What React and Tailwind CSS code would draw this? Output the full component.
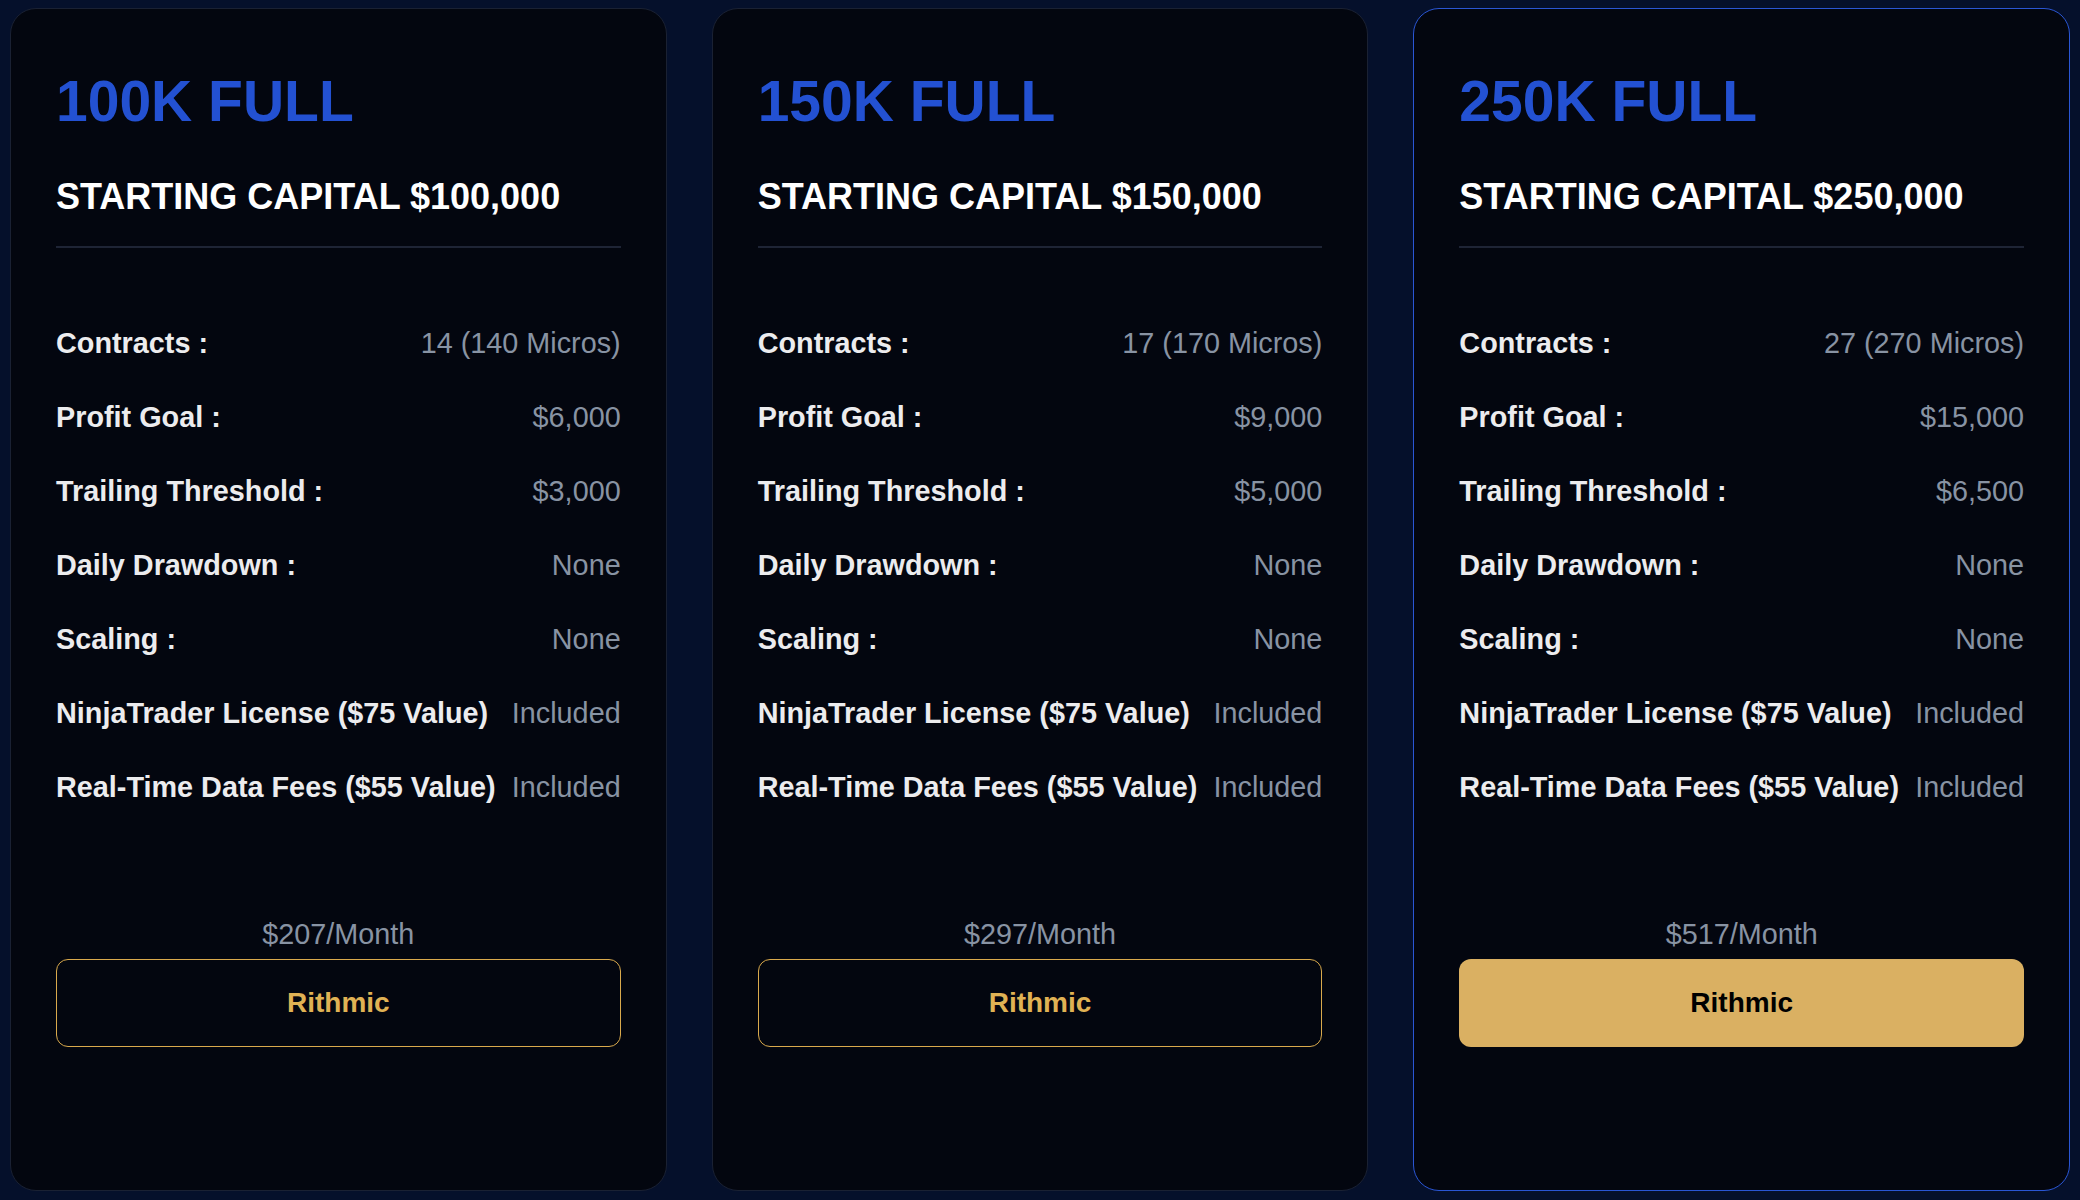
// Pricing cards — three "FULL" account plans side by side

const PLANS = [
  {
    name: '100K FULL',
    capital: '$100,000',
    contracts: '14 (140 Micros)',
    profit: '$6,000',
    trailing: '$3,000',
    price: '$207/Month',
    featured: false,
  },
  {
    name: '150K FULL',
    capital: '$150,000',
    contracts: '17 (170 Micros)',
    profit: '$9,000',
    trailing: '$5,000',
    price: '$297/Month',
    featured: false,
  },
  {
    name: '250K FULL',
    capital: '$250,000',
    contracts: '27 (270 Micros)',
    profit: '$15,000',
    trailing: '$6,500',
    price: '$517/Month',
    featured: true,
  },
];

function Row({ label, value }) {
  return (
    <div className="h-[74px] flex items-center justify-between">
      <span className="text-[28.8px] font-bold text-[#ececee] whitespace-nowrap">{label}</span>
      <span className="text-[28.8px] text-[#8893a3] whitespace-nowrap">{value}</span>
    </div>
  );
}

function PlanCard({ plan }) {
  const rows = [
    ['Contracts :', plan.contracts],
    ['Profit Goal :', plan.profit],
    ['Trailing Threshold :', plan.trailing],
    ['Daily Drawdown :', 'None'],
    ['Scaling :', 'None'],
    ['NinjaTrader License ($75 Value)', 'Included'],
    ['Real-Time Data Fees ($55 Value)', 'Included'],
  ];

  return (
    <div
      className={
        'flex-1 flex flex-col rounded-[26px] bg-[#03060f] px-[45px] pt-[64px] ' +
        (plan.featured ? 'border-[1.5px] border-[#2a56d4]' : 'border border-[#1a2133]')
      }
    >
      <h2 className="text-[57px] leading-none font-bold text-[#2351d2]">{plan.name}</h2>
      <h3 className="mt-[49px] text-[36px] leading-none font-bold text-white">
        STARTING CAPITAL {plan.capital}
      </h3>
      <div className="mt-[31px] h-[2px] bg-[#1e2435]" />

      <div className="mt-[59px] flex flex-col">
        {rows.map(([label, value]) => (
          <Row key={label} label={label} value={value} />
        ))}
      </div>

      <p className="mt-[93px] text-center text-[28.8px] leading-[32px] text-[#8893a3]">{plan.price}</p>
      <button
        className={
          'mt-[9px] h-[88px] rounded-[12px] text-[28px] font-bold ' +
          (plan.featured
            ? 'bg-[#dab062] text-black'
            : 'border-[1.5px] border-[#d9a94c] text-[#e0b254] bg-transparent')
        }
      >
        Rithmic
      </button>
    </div>
  );
}

export default function App() {
  return (
    <div
      className="h-[1200px] w-[2080px] bg-[#05102b] flex gap-[45px] px-[10px] pt-[8px] pb-[9px]"
      style={{ fontFamily: '"Liberation Sans", Arial, sans-serif' }}
    >
      {PLANS.map((p) => (
        <PlanCard key={p.name} plan={p} />
      ))}
    </div>
  );
}
